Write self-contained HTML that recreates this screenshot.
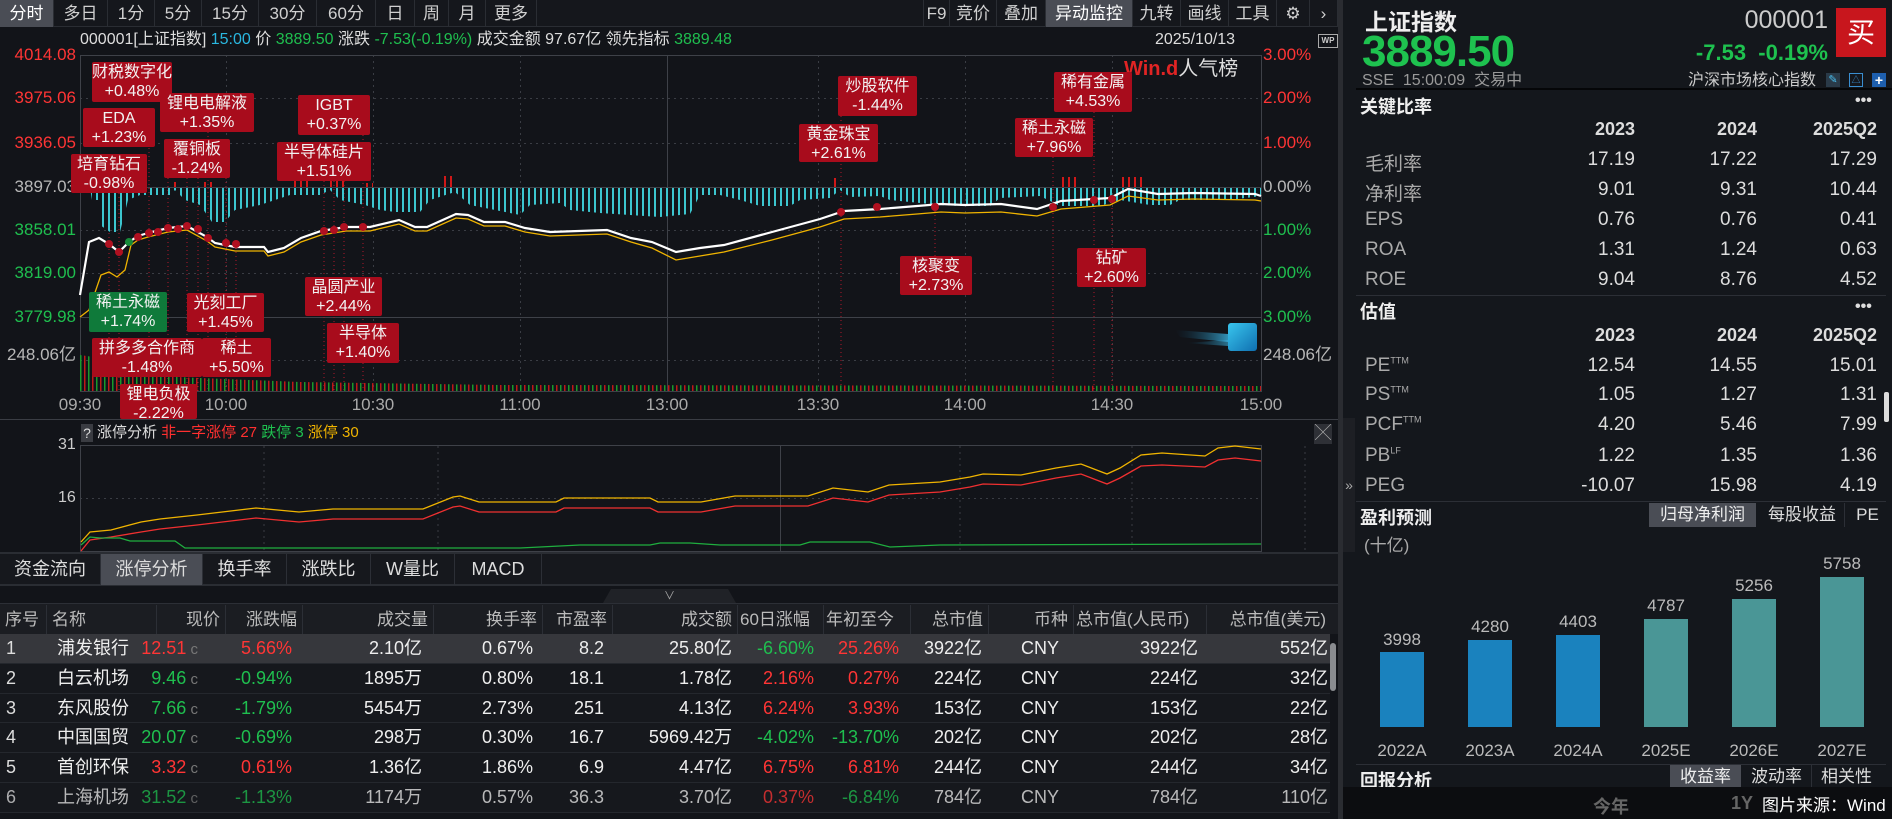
<!DOCTYPE html>
<html><head><meta charset="utf-8">
<style>
*{margin:0;padding:0;box-sizing:border-box}
body{width:1892px;height:819px;background:#121419;overflow:hidden;position:relative;font-family:"Liberation Sans","Noto Sans CJK SC",sans-serif;color:#d8d8d8}
.a{position:absolute;white-space:nowrap}
.tb{position:absolute;top:0;height:27px;font-size:17px;line-height:27px;text-align:center;color:#d0d0d0;border-right:1px solid #2a2d33}
.hl{background:#4a4d55;color:#fff}
.lab{position:absolute;background:#a80c1c;color:#f2f2f2;font-size:16px;line-height:19px;text-align:center;border-radius:2px;padding-top:1px}
.g{background:#0f7a3a}
.r{color:#ff3535}.gr{color:#1fbf4f}.gy{color:#b8b8b8}
.ly{position:absolute;left:0;width:76px;text-align:right;font-size:17px;line-height:18px}
.ry{position:absolute;left:1263px;font-size:17px;line-height:18px}
.tl{position:absolute;top:395px;font-size:17px;color:#aaa;width:60px;text-align:center}
.th{position:absolute;top:605px;height:29px;font-size:17px;line-height:29px;color:#bbb;border-right:1px solid #2c2f36;padding:0 5px}
.row{position:absolute;left:0;width:1330px;height:29.8px;border-bottom:1px solid #24272d;background:#16181d}
.c{position:absolute;font-size:18px;line-height:29px;top:0}
.rv{position:absolute;font-size:19px;color:#ddd;text-align:right}
.rl{position:absolute;left:1365px;font-size:19px;color:#aaa}
.tab{position:absolute;top:554px;height:31px;font-size:18px;line-height:31px;text-align:center;color:#ddd;border-right:1px solid #2c2f36}
</style></head><body>
<div class="a" style="left:0;top:0;width:1338px;height:27px;background:#15171c;border-bottom:1px solid #2a2d33"></div>
<div class="tb hl" style="left:0;width:54px">分时</div>
<div class="tb" style="left:54px;width:54px">多日</div>
<div class="tb" style="left:108px;width:47px">1分</div>
<div class="tb" style="left:155px;width:47px">5分</div>
<div class="tb" style="left:202px;width:57px">15分</div>
<div class="tb" style="left:259px;width:58px">30分</div>
<div class="tb" style="left:317px;width:59px">60分</div>
<div class="tb" style="left:376px;width:39px">日</div>
<div class="tb" style="left:415px;width:34px">周</div>
<div class="tb" style="left:449px;width:37px">月</div>
<div class="tb" style="left:486px;width:51px">更多</div>
<div class="tb" style="left:923px;width:27px;border-left:1px solid #2a2d33">F9</div>
<div class="tb" style="left:950px;width:47px">竞价</div>
<div class="tb" style="left:997px;width:49px">叠加</div>
<div class="tb hl" style="left:1046px;width:87px">异动监控</div>
<div class="tb" style="left:1133px;width:48px">九转</div>
<div class="tb" style="left:1181px;width:48px">画线</div>
<div class="tb" style="left:1229px;width:48px">工具</div>
<div class="tb" style="left:1277px;width:33px">⚙</div>
<div class="tb" style="left:1310px;width:28px">›</div>
<div class="a" style="left:1338px;top:0;width:5px;height:819px;background:#2a2c31"></div>

<div class="a" style="left:80px;top:30px;font-size:16px;line-height:20px;color:#ddd">000001[上证指数] <span style="color:#2ab7e0">15:00</span> 价 <span class="gr">3889.50</span> 涨跌 <span class="gr">-7.53(-0.19%)</span> 成交金额 97.67亿 领先指标 <span class="gr">3889.48</span></div>
<div class="a" style="left:1155px;top:30px;font-size:16px;line-height:20px;color:#ddd">2025/10/13</div>
<div class="a" style="left:1318px;top:34px;width:20px;height:14px;border:1px solid #aaa;font-size:8px;line-height:12px;text-align:center;color:#ccc;font-weight:bold">WP</div>

<svg class="a" style="left:0;top:0" width="1340" height="560">
<defs>
<pattern id="cy" width="6" height="10" patternUnits="userSpaceOnUse"><rect x="0" y="0" width="2" height="10" fill="#3cc6cf"/></pattern>
<pattern id="rd" width="6" height="10" patternUnits="userSpaceOnUse"><rect x="0" y="0" width="2" height="10" fill="#d01818"/></pattern>
<pattern id="vol" width="8" height="10" patternUnits="userSpaceOnUse"><rect x="0" y="0" width="1.5" height="10" fill="#1a9a2a"/><rect x="4" y="0" width="1.5" height="10" fill="#c01818"/></pattern>
<linearGradient id="cube" x1="0" y1="0" x2="1" y2="1"><stop offset="0" stop-color="#39c6ee"/><stop offset="1" stop-color="#0f6fb0"/></linearGradient>
<linearGradient id="trail" x1="0" y1="0" x2="1" y2="0"><stop offset="0" stop-color="#0e3a55" stop-opacity="0"/><stop offset="1" stop-color="#3ab0dd"/></linearGradient>
</defs>
<g stroke="#3a3d44" stroke-width="1" stroke-dasharray="2,4" fill="none">
<line x1="80" y1="98.5" x2="1261" y2="98.5"/><line x1="80" y1="143.5" x2="1261" y2="143.5"/>
<line x1="80" y1="230.5" x2="1261" y2="230.5"/><line x1="80" y1="273.5" x2="1261" y2="273.5"/>
<line x1="80" y1="360.5" x2="1261" y2="360.5"/>
<line x1="226.5" y1="55" x2="226.5" y2="391"/><line x1="373.5" y1="55" x2="373.5" y2="391"/><line x1="520.5" y1="55" x2="520.5" y2="391"/>
<line x1="818.5" y1="55" x2="818.5" y2="391"/><line x1="965.5" y1="55" x2="965.5" y2="391"/><line x1="1112.5" y1="55" x2="1112.5" y2="391"/>
<line x1="264" y1="446" x2="264" y2="551"/><line x1="438" y1="446" x2="438" y2="551"/><line x1="960" y1="446" x2="960" y2="551"/><line x1="1132" y1="446" x2="1132" y2="551"/><line x1="1305" y1="446" x2="1305" y2="551"/>
<line x1="80" y1="498.5" x2="1261" y2="498.5"/>
</g>
<g stroke="#3e4148" stroke-width="1" fill="none">
<rect x="80.5" y="55.5" width="1181" height="336"/>
<line x1="80" y1="187.5" x2="1261" y2="187.5"/><line x1="80" y1="317.5" x2="1261" y2="317.5"/>
<line x1="667.5" y1="55" x2="667.5" y2="391"/>
<rect x="80.5" y="445.5" width="1181" height="106"/>
<line x1="780.5" y1="446" x2="780.5" y2="551"/>
</g>
<line x1="0" y1="419.5" x2="1338" y2="419.5" stroke="#3a3d44"/>
<g stroke="#b0182a" stroke-width="1" stroke-dasharray="1,3">
<line x1="109" y1="193" x2="109" y2="391"/><line x1="119" y1="193" x2="119" y2="391"/><line x1="149" y1="132" x2="149" y2="391"/><line x1="168" y1="178" x2="168" y2="391"/><line x1="187" y1="178" x2="187" y2="391"/><line x1="198" y1="178" x2="198" y2="391"/><line x1="208" y1="132" x2="208" y2="391"/><line x1="226" y1="178" x2="226" y2="391"/><line x1="236" y1="240" x2="236" y2="391"/><line x1="324" y1="181" x2="324" y2="391"/><line x1="334" y1="181" x2="334" y2="391"/><line x1="344" y1="181" x2="344" y2="391"/><line x1="363" y1="135" x2="363" y2="391"/><line x1="841" y1="116" x2="841" y2="391"/><line x1="935" y1="207" x2="935" y2="256"/><line x1="1053" y1="157" x2="1053" y2="391"/><line x1="1094" y1="112" x2="1094" y2="391"/><line x1="1112" y1="200" x2="1112" y2="391"/>
</g>
<polygon fill="url(#cy)" points="80,188 90,188 92,200 98,200 100,225 110,232 120,232 128,200 140,195 170,195 175,190 185,200 200,205 212,222 225,222 235,210 260,205 275,200 290,195 320,195 330,190 340,200 365,205 380,210 395,212 420,212 430,200 455,192 470,205 495,210 520,215 530,205 560,203 570,210 600,213 630,215 660,217 690,214 700,195 720,195 740,200 760,206 790,206 800,200 830,198 840,190 850,197 880,196 890,200 920,203 940,205 960,206 990,206 1000,198 1040,196 1060,206 1100,206 1120,200 1150,205 1170,205 1180,200 1230,200 1261,196 1261,188"/>
<g fill="url(#rd)">
<rect x="170" y="182" width="10" height="5"/><rect x="200" y="182" width="12" height="5"/><rect x="290" y="180" width="20" height="7"/><rect x="330" y="180" width="15" height="7"/><rect x="365" y="183" width="8" height="4"/><rect x="440" y="176" width="16" height="11"/><rect x="830" y="178" width="9" height="9"/><rect x="1060" y="177" width="16" height="10"/><rect x="1120" y="177" width="22" height="10"/>
</g>
<polygon fill="url(#vol)" points="80,391 80,355 100,358 110,368 130,375 200,378 300,382 500,385 1261,386 1261,391"/>
<polyline fill="none" stroke="#f0b400" stroke-width="1.3" points="80,317 89,310 101,275 109,272 117,277 125,270 131,245 138,240"/>
<polyline fill="none" stroke="#f0b400" stroke-width="1.3" transform="translate(0,4)" points="138,236 148,233 168,228 187,226 207,237 215,243 235,247 264,247 268,252 284,248 301,238 321,231 346,227 370,227 399,220 415,227 427,227 456,214 468,215 484,222 505,222 525,228 550,232 607,230 631,238 652,244 676,256 700,252 724,248 772,236 820,223 844,215 880,213 917,210 941,208 965,209 1001,208 1037,212 1061,205 1110,201 1128,192 1158,196 1194,195 1255,196 1261,197"/>
<polyline fill="none" stroke="#fff" stroke-width="2.2" points="80,295 89,242 99,238 109,244 119,252 129,242 138,236 148,233 168,228 187,226 207,237 215,243 235,247 264,247 268,252 284,248 301,238 321,231 346,227 370,227 399,220 415,227 427,227 456,214 468,215 484,222 505,222 525,228 550,232 607,230 631,238 652,242 676,252 700,248 724,245 772,232 820,219 844,211 880,209 917,206 941,204 965,205 1001,204 1037,209 1061,201 1110,198 1128,189 1158,194 1194,193 1255,194 1261,196"/>
<g fill="#b01020">
<circle cx="109" cy="244" r="4"/><circle cx="119" cy="252" r="4"/><circle cx="138" cy="237" r="4"/><circle cx="149" cy="233" r="4"/><circle cx="158" cy="232" r="4"/><circle cx="168" cy="228" r="4"/><circle cx="178" cy="229" r="4"/><circle cx="187" cy="226" r="4"/><circle cx="198" cy="229" r="4"/><circle cx="208" cy="238" r="4"/><circle cx="226" cy="243" r="4"/><circle cx="236" cy="244" r="4"/><circle cx="324" cy="231" r="4"/><circle cx="334" cy="230" r="4"/><circle cx="344" cy="227" r="4"/><circle cx="363" cy="227" r="4"/><circle cx="841" cy="212" r="4"/><circle cx="877" cy="207" r="4"/><circle cx="935" cy="207" r="4"/><circle cx="1053" cy="207" r="4"/><circle cx="1094" cy="200" r="4"/><circle cx="1112" cy="199" r="4"/>
</g>
<circle cx="129" cy="242" r="4" fill="#168a3a"/>
<polygon points="1175,330 1228,334 1228,342 1180,337" fill="url(#trail)" opacity=".8"/>
<polygon points="1185,343 1228,340 1228,346" fill="url(#trail)" opacity=".6"/>
<rect x="1228" y="323" width="29" height="28" rx="3" fill="url(#cube)"/>
<polyline fill="none" stroke="#f0b400" stroke-width="1.3" points="81,542 90,532 111,530 141,522 160,519 197,515 256,508 299,512 333,509 423,509 453,497 460,496 479,502 556,502 564,498 650,498 658,502 701,502 735,496 808,496 833,488 868,492 889,485 940,482 970,477 983,474 1021,475 1056,468 1081,464 1107,474 1120,468 1141,455 1162,453 1205,456 1218,448 1235,446 1261,449"/>
<polyline fill="none" stroke="#f03030" stroke-width="1.3" points="81,551 90,540 111,537 141,532 160,529 197,525 256,518 299,522 333,519 423,519 453,507 460,506 479,512 556,512 564,508 650,508 658,512 701,512 735,506 808,506 833,498 868,502 889,495 940,492 970,487 983,484 1021,485 1056,478 1081,474 1107,484 1120,478 1141,466 1162,465 1205,467 1218,460 1235,458 1261,461"/>
<polyline fill="none" stroke="#1fae3f" stroke-width="1.3" points="81,545 90,537 100,538 120,538 130,541 175,541 185,548 520,548 580,545 650,545 660,543 690,543 720,545 800,545 810,542 870,542 890,547 940,545 1261,544"/>
</svg>

<div class="ly r" style="top:46px">4014.08</div>
<div class="ly r" style="top:89px">3975.06</div>
<div class="ly r" style="top:134px">3936.05</div>
<div class="ly gy" style="top:178px">3897.03</div>
<div class="ly gr" style="top:221px">3858.01</div>
<div class="ly gr" style="top:264px">3819.00</div>
<div class="ly gr" style="top:308px">3779.98</div>
<div class="ly gy" style="top:346px">248.06亿</div>
<div class="ry r" style="top:46px">3.00%</div>
<div class="ry r" style="top:89px">2.00%</div>
<div class="ry r" style="top:134px">1.00%</div>
<div class="ry gy" style="top:178px">0.00%</div>
<div class="ry gr" style="top:221px">1.00%</div>
<div class="ry gr" style="top:264px">2.00%</div>
<div class="ry gr" style="top:308px">3.00%</div>
<div class="ry gy" style="top:346px">248.06亿</div>
<div class="tl" style="left:50px">09:30</div>
<div class="tl" style="left:196px">10:00</div>
<div class="tl" style="left:343px">10:30</div>
<div class="tl" style="left:490px">11:00</div>
<div class="tl" style="left:637px">13:00</div>
<div class="tl" style="left:788px">13:30</div>
<div class="tl" style="left:935px">14:00</div>
<div class="tl" style="left:1082px">14:30</div>
<div class="tl" style="left:1231px">15:00</div>
<div class="a" style="left:1124px;top:58px;font-size:20px;line-height:22px;color:#ddd"><span style="color:#e02424;font-weight:bold">Win.d</span>人气榜</div>

<div class="lab" style="left:92px;top:62px;width:80px;height:40px">财税数字化<br>+0.48%</div>
<div class="lab" style="left:83px;top:108px;width:72px;height:39px">EDA<br>+1.23%</div>
<div class="lab" style="left:160px;top:93px;width:94px;height:39px">锂电电解液<br>+1.35%</div>
<div class="lab" style="left:298px;top:95px;width:72px;height:40px">IGBT<br>+0.37%</div>
<div class="lab" style="left:164px;top:139px;width:66px;height:39px">覆铜板<br>-1.24%</div>
<div class="lab" style="left:277px;top:142px;width:94px;height:39px">半导体硅片<br>+1.51%</div>
<div class="lab" style="left:71px;top:154px;width:76px;height:39px">培育钻石<br>-0.98%</div>
<div class="lab g" style="left:89px;top:292px;width:78px;height:40px">稀土永磁<br>+1.74%</div>
<div class="lab" style="left:187px;top:293px;width:77px;height:39px">光刻工厂<br>+1.45%</div>
<div class="lab" style="left:305px;top:277px;width:77px;height:39px">晶圆产业<br>+2.44%</div>
<div class="lab" style="left:327px;top:323px;width:72px;height:40px">半导体<br>+1.40%</div>
<div class="lab" style="left:92px;top:338px;width:110px;height:39px">拼多多合作商<br>-1.48%</div>
<div class="lab" style="left:202px;top:338px;width:69px;height:39px">稀土<br>+5.50%</div>
<div class="lab" style="left:120px;top:384px;width:77px;height:35px;overflow:hidden">锂电负极<br>-2.22%</div>
<div class="lab" style="left:838px;top:76px;width:79px;height:40px">炒股软件<br>-1.44%</div>
<div class="lab" style="left:799px;top:124px;width:79px;height:38px">黄金珠宝<br>+2.61%</div>
<div class="lab" style="left:900px;top:256px;width:72px;height:39px">核聚变<br>+2.73%</div>
<div class="lab" style="left:1077px;top:248px;width:69px;height:39px">钻矿<br>+2.60%</div>
<div class="lab" style="left:1054px;top:72px;width:78px;height:40px">稀有金属<br>+4.53%</div>
<div class="lab" style="left:1015px;top:118px;width:78px;height:39px">稀土永磁<br>+7.96%</div>

<div class="a" style="left:81px;top:424px;width:12px;height:18px;background:#3a3c42;font-size:14px;line-height:18px;text-align:center;color:#ddd">?</div>
<div class="a" style="left:97px;top:423px;font-size:15px;line-height:20px;color:#ddd">涨停分析 <span style="color:#ff3030">非一字涨停 27</span> <span class="gr">跌停 3</span> <span style="color:#f0b400">涨停 30</span></div>
<div class="a" style="left:58px;top:436px;font-size:16px;color:#ccc">31</div>
<div class="a" style="left:58px;top:489px;font-size:16px;color:#ccc">16</div>
<div class="a" style="left:1314px;top:424px;width:18px;height:20px;background:#2e3036;color:#aaa;font-size:16px;line-height:20px;text-align:center">╳</div>

<div class="a" style="left:0;top:552px;width:1338px;height:34px;background:#16181d;border-top:2px solid #2a2d33;border-bottom:2px solid #2a2d33"></div>
<div class="tab" style="left:0;width:101px">资金流向</div>
<div class="tab hl" style="left:101px;width:102px">涨停分析</div>
<div class="tab" style="left:203px;width:84px">换手率</div>
<div class="tab" style="left:287px;width:84px">涨跌比</div>
<div class="tab" style="left:371px;width:84px">W量比</div>
<div class="tab" style="left:455px;width:87px">MACD</div>
<div class="a" style="left:0;top:588px;width:1338px;height:15px;background:#121419"></div>
<div class="a" style="left:603px;top:589px;width:133px;height:14px;background:#202227;clip-path:polygon(6% 0,94% 0,100% 100%,0 100%);font-size:11px;line-height:14px;text-align:center;color:#aaa">∨</div>

<div class="a" style="left:0;top:603px;width:1338px;height:31px;background:#1b1d22;border-top:1px solid #2c2f36"></div>
<div class="th" style="left:0;width:47px">序号</div>
<div class="th" style="left:47px;width:110px">名称</div>
<div class="th" style="left:157px;width:69px;text-align:right">现价</div>
<div class="th" style="left:226px;width:77px;text-align:right">涨跌幅</div>
<div class="th" style="left:303px;width:131px;text-align:right">成交量</div>
<div class="th" style="left:434px;width:109px;text-align:right">换手率</div>
<div class="th" style="left:543px;width:70px;text-align:right">市盈率</div>
<div class="th" style="left:613px;width:125px;text-align:right">成交额</div>
<div class="th" style="left:738px;width:86px;padding:0 2px">60日涨幅</div>
<div class="th" style="left:824px;width:87px;padding:0 2px">年初至今</div>
<div class="th" style="left:911px;width:78px;text-align:right">总市值</div>
<div class="th" style="left:989px;width:85px;text-align:right">币种</div>
<div class="th" style="left:1074px;width:133px;padding:0 2px">总市值(人民币)</div>
<div class="th" style="left:1207px;width:124px;text-align:right;border:none">总市值(美元)</div>

<div class="row" style="top:634px;background:#36373c"></div>
<div class="row" style="top:663.8px"></div>
<div class="row" style="top:693.6px"></div>
<div class="row" style="top:723.4px"></div>
<div class="row" style="top:753.2px"></div>
<div class="row" style="top:783px"></div>
<div class="a" style="left:1330px;top:643px;width:6px;height:48px;background:#8a8c90;border-radius:3px"></div>

<div class="a" style="left:0;top:634px;width:1330px;height:180px">
<div class="a" style="top:0;left:0;width:1330px;height:30px">
 <span class="c" style="left:6px;color:#ddd">1</span><span class="c" style="left:57px;color:#eee">浦发银行</span>
 <span class="c r" style="right:1132px">12.51<span style="color:#777;font-size:15px"> c</span></span>
 <span class="c r" style="right:1038px">5.66%</span><span class="c" style="right:908px;color:#eee">2.10亿</span><span class="c" style="right:797px;color:#eee">0.67%</span><span class="c" style="right:726px;color:#eee">8.2</span><span class="c" style="right:598px;color:#eee">25.80亿</span><span class="c gr" style="right:516px">-6.60%</span><span class="c r" style="right:431px">25.26%</span><span class="c" style="right:348px;color:#eee">3922亿</span><span class="c" style="right:271px;color:#eee">CNY</span><span class="c" style="right:132px;color:#eee">3922亿</span><span class="c" style="right:2px;color:#eee">552亿</span>
</div>
<div class="a" style="top:29.8px;left:0;width:1330px;height:30px">
 <span class="c" style="left:6px;color:#ddd">2</span><span class="c" style="left:57px;color:#eee">白云机场</span>
 <span class="c gr" style="right:1132px">9.46<span style="color:#777;font-size:15px"> c</span></span>
 <span class="c gr" style="right:1038px">-0.94%</span><span class="c" style="right:908px;color:#eee">1895万</span><span class="c" style="right:797px;color:#eee">0.80%</span><span class="c" style="right:726px;color:#eee">18.1</span><span class="c" style="right:598px;color:#eee">1.78亿</span><span class="c r" style="right:516px">2.16%</span><span class="c r" style="right:431px">0.27%</span><span class="c" style="right:348px;color:#eee">224亿</span><span class="c" style="right:271px;color:#eee">CNY</span><span class="c" style="right:132px;color:#eee">224亿</span><span class="c" style="right:2px;color:#eee">32亿</span>
</div>
<div class="a" style="top:59.6px;left:0;width:1330px;height:30px">
 <span class="c" style="left:6px;color:#ddd">3</span><span class="c" style="left:57px;color:#eee">东风股份</span>
 <span class="c gr" style="right:1132px">7.66<span style="color:#777;font-size:15px"> c</span></span>
 <span class="c gr" style="right:1038px">-1.79%</span><span class="c" style="right:908px;color:#eee">5454万</span><span class="c" style="right:797px;color:#eee">2.73%</span><span class="c" style="right:726px;color:#eee">251</span><span class="c" style="right:598px;color:#eee">4.13亿</span><span class="c r" style="right:516px">6.24%</span><span class="c r" style="right:431px">3.93%</span><span class="c" style="right:348px;color:#eee">153亿</span><span class="c" style="right:271px;color:#eee">CNY</span><span class="c" style="right:132px;color:#eee">153亿</span><span class="c" style="right:2px;color:#eee">22亿</span>
</div>
<div class="a" style="top:89.4px;left:0;width:1330px;height:30px">
 <span class="c" style="left:6px;color:#ddd">4</span><span class="c" style="left:57px;color:#eee">中国国贸</span>
 <span class="c gr" style="right:1132px">20.07<span style="color:#777;font-size:15px"> c</span></span>
 <span class="c gr" style="right:1038px">-0.69%</span><span class="c" style="right:908px;color:#eee">298万</span><span class="c" style="right:797px;color:#eee">0.30%</span><span class="c" style="right:726px;color:#eee">16.7</span><span class="c" style="right:598px;color:#eee">5969.42万</span><span class="c gr" style="right:516px">-4.02%</span><span class="c gr" style="right:431px">-13.70%</span><span class="c" style="right:348px;color:#eee">202亿</span><span class="c" style="right:271px;color:#eee">CNY</span><span class="c" style="right:132px;color:#eee">202亿</span><span class="c" style="right:2px;color:#eee">28亿</span>
</div>
<div class="a" style="top:119.2px;left:0;width:1330px;height:30px">
 <span class="c" style="left:6px;color:#ddd">5</span><span class="c" style="left:57px;color:#eee">首创环保</span>
 <span class="c r" style="right:1132px">3.32<span style="color:#777;font-size:15px"> c</span></span>
 <span class="c r" style="right:1038px">0.61%</span><span class="c" style="right:908px;color:#eee">1.36亿</span><span class="c" style="right:797px;color:#eee">1.86%</span><span class="c" style="right:726px;color:#eee">6.9</span><span class="c" style="right:598px;color:#eee">4.47亿</span><span class="c r" style="right:516px">6.75%</span><span class="c r" style="right:431px">6.81%</span><span class="c" style="right:348px;color:#eee">244亿</span><span class="c" style="right:271px;color:#eee">CNY</span><span class="c" style="right:132px;color:#eee">244亿</span><span class="c" style="right:2px;color:#eee">34亿</span>
</div>
<div class="a" style="top:149px;left:0;width:1330px;height:30px;opacity:.75">
 <span class="c" style="left:6px;color:#ddd">6</span><span class="c" style="left:57px;color:#eee">上海机场</span>
 <span class="c gr" style="right:1132px">31.52<span style="color:#777;font-size:15px"> c</span></span>
 <span class="c gr" style="right:1038px">-1.13%</span><span class="c" style="right:908px;color:#eee">1174万</span><span class="c" style="right:797px;color:#eee">0.57%</span><span class="c" style="right:726px;color:#eee">36.3</span><span class="c" style="right:598px;color:#eee">3.70亿</span><span class="c r" style="right:516px">0.37%</span><span class="c gr" style="right:431px">-6.84%</span><span class="c" style="right:348px;color:#eee">784亿</span><span class="c" style="right:271px;color:#eee">CNY</span><span class="c" style="right:132px;color:#eee">784亿</span><span class="c" style="right:2px;color:#eee">110亿</span>
</div>
</div>

<div class="a" style="left:1343px;top:0;width:549px;height:819px;background:#14171c"></div>
<div class="a" style="left:1343px;top:418px;width:12px;height:134px;background:#1d1f24;color:#aaa;font-size:14px;line-height:134px;text-align:center">»</div>
<div class="a" style="left:1365px;top:3px;font-size:23px;font-weight:bold;color:#eee">上证指数</div>
<div class="a" style="left:1362px;top:28px;font-size:44px;font-weight:bold;color:#1ec24f;letter-spacing:-1px;line-height:48px">3889.50</div>
<div class="a" style="left:1362px;top:72px;font-size:16px;color:#999;line-height:18px">SSE&nbsp;&nbsp;15:00:09&nbsp;&nbsp;交易中</div>
<div class="a" style="left:1700px;top:5px;width:128px;text-align:right;font-size:25px;color:#ccc;line-height:30px">000001</div>
<div class="a" style="left:1660px;top:40px;width:168px;text-align:right;font-size:22px;font-weight:bold;color:#1ec24f;line-height:26px">-7.53&nbsp;&nbsp;-0.19%</div>
<div class="a" style="left:1836px;top:8px;width:50px;height:49px;background:#c8161d;color:#fff;font-size:28px;line-height:49px;text-align:center">买</div>
<div class="a" style="left:1680px;top:72px;width:136px;text-align:right;font-size:16px;color:#ccc;line-height:18px">沪深市场核心指数</div>
<div class="a" style="left:1826px;top:73px;width:14px;height:14px;background:#2a3a48;color:#4ac0f0;font-size:11px;line-height:14px;text-align:center">✎</div>
<div class="a" style="left:1849px;top:73px;width:14px;height:14px;border:1px solid #3a8ed0;color:#3a8ed0;font-size:9px;line-height:12px;text-align:center">△</div>
<div class="a" style="left:1872px;top:73px;width:14px;height:14px;background:#1e5fae;color:#fff;font-size:14px;line-height:14px;text-align:center;font-weight:bold">+</div>
<div class="a" style="left:1356px;top:88px;width:536px;height:2px;background:#050608"></div>

<div class="a" style="left:1360px;top:93px;font-size:18px;font-weight:bold;color:#eee">关键比率</div>
<div class="a" style="left:1855px;top:92px;font-size:16px;color:#ddd;font-weight:bold">•••</div>
<div class="rv" style="top:119px;right:257px;font-weight:bold;font-size:18px">2023</div>
<div class="rv" style="top:119px;right:135px;font-weight:bold;font-size:18px">2024</div>
<div class="rv" style="top:119px;right:15px;font-weight:bold;font-size:18px">2025Q2</div>
<div class="rl" style="top:149px">毛利率</div><div class="rv" style="top:149px;right:257px">17.19</div><div class="rv" style="top:149px;right:135px">17.22</div><div class="rv" style="top:149px;right:15px">17.29</div>
<div class="rl" style="top:179px">净利率</div><div class="rv" style="top:179px;right:257px">9.01</div><div class="rv" style="top:179px;right:135px">9.31</div><div class="rv" style="top:179px;right:15px">10.44</div>
<div class="rl" style="top:209px">EPS</div><div class="rv" style="top:209px;right:257px">0.76</div><div class="rv" style="top:209px;right:135px">0.76</div><div class="rv" style="top:209px;right:15px">0.41</div>
<div class="rl" style="top:239px">ROA</div><div class="rv" style="top:239px;right:257px">1.31</div><div class="rv" style="top:239px;right:135px">1.24</div><div class="rv" style="top:239px;right:15px">0.63</div>
<div class="rl" style="top:269px">ROE</div><div class="rv" style="top:269px;right:257px">9.04</div><div class="rv" style="top:269px;right:135px">8.76</div><div class="rv" style="top:269px;right:15px">4.52</div>
<div class="a" style="left:1356px;top:295px;width:530px;height:1px;background:#2c2f36"></div>
<div class="a" style="left:1360px;top:298px;font-size:18px;font-weight:bold;color:#eee">估值</div>
<div class="a" style="left:1855px;top:298px;font-size:16px;color:#ddd;font-weight:bold">•••</div>
<div class="rv" style="top:325px;right:257px;font-weight:bold;font-size:18px">2023</div>
<div class="rv" style="top:325px;right:135px;font-weight:bold;font-size:18px">2024</div>
<div class="rv" style="top:325px;right:15px;font-weight:bold;font-size:18px">2025Q2</div>
<div class="rl" style="top:355px">PE<sup style="font-size:9px">TTM</sup></div><div class="rv" style="top:355px;right:257px">12.54</div><div class="rv" style="top:355px;right:135px">14.55</div><div class="rv" style="top:355px;right:15px">15.01</div>
<div class="rl" style="top:384px">PS<sup style="font-size:9px">TTM</sup></div><div class="rv" style="top:384px;right:257px">1.05</div><div class="rv" style="top:384px;right:135px">1.27</div><div class="rv" style="top:384px;right:15px">1.31</div>
<div class="rl" style="top:414px">PCF<sup style="font-size:9px">TTM</sup></div><div class="rv" style="top:414px;right:257px">4.20</div><div class="rv" style="top:414px;right:135px">5.46</div><div class="rv" style="top:414px;right:15px">7.99</div>
<div class="rl" style="top:445px">PB<sup style="font-size:9px">LF</sup></div><div class="rv" style="top:445px;right:257px">1.22</div><div class="rv" style="top:445px;right:135px">1.35</div><div class="rv" style="top:445px;right:15px">1.36</div>
<div class="rl" style="top:475px">PEG</div><div class="rv" style="top:475px;right:257px">-10.07</div><div class="rv" style="top:475px;right:135px">15.98</div><div class="rv" style="top:475px;right:15px">4.19</div>
<div class="a" style="left:1884px;top:392px;width:5px;height:30px;background:#ddd;border-radius:2px"></div>
<div class="a" style="left:1356px;top:501px;width:530px;height:1px;background:#2c2f36"></div>
<div class="a" style="left:1360px;top:504px;font-size:18px;font-weight:bold;color:#eee">盈利预测</div>
<div class="a" style="left:1649px;top:503px;width:107px;height:24px;background:#4a4d55;color:#eee;font-size:17px;line-height:24px;text-align:center">归母净利润</div>
<div class="a" style="left:1760px;top:503px;width:85px;height:24px;color:#ddd;font-size:17px;line-height:24px;text-align:center;border-right:1px solid #2c2f36">每股收益</div>
<div class="a" style="left:1850px;top:503px;width:35px;height:24px;color:#ddd;font-size:17px;line-height:24px;text-align:center">PE</div>
<div class="a" style="left:1364px;top:531px;font-size:17px;color:#aaa">(十亿)</div>
<svg class="a" style="left:1343px;top:550px" width="549" height="215">
<g fill="#1a82be"><rect x="37" y="102" width="44" height="75"/><rect x="125" y="90" width="44" height="87"/><rect x="213" y="85" width="44" height="92"/></g>
<g fill="#4a9696"><rect x="301" y="69" width="44" height="108"/><rect x="389" y="49" width="44" height="128"/><rect x="477" y="27" width="44" height="150"/></g>
<g fill="#bbb" font-family="Liberation Sans" font-size="17" text-anchor="middle">
<text x="59" y="95">3998</text><text x="147" y="82">4280</text><text x="235" y="77">4403</text><text x="323" y="61">4787</text><text x="411" y="41">5256</text><text x="499" y="19">5758</text>
<text x="59" y="206">2022A</text><text x="147" y="206">2023A</text><text x="235" y="206">2024A</text><text x="323" y="206">2025E</text><text x="411" y="206">2026E</text><text x="499" y="206">2027E</text>
</g>
</svg>
<div class="a" style="left:1356px;top:764px;width:530px;height:1px;background:#2c2f36"></div>
<div class="a" style="left:1360px;top:767px;font-size:18px;font-weight:bold;color:#eee">回报分析</div>
<div class="a" style="left:1670px;top:765px;width:71px;height:24px;background:#4a4d55;color:#eee;font-size:17px;line-height:24px;text-align:center">收益率</div>
<div class="a" style="left:1742px;top:765px;width:70px;height:24px;color:#ddd;font-size:17px;line-height:24px;text-align:center;border-right:1px solid #2c2f36">波动率</div>
<div class="a" style="left:1813px;top:765px;width:67px;height:24px;color:#ddd;font-size:17px;line-height:24px;text-align:center">相关性</div>
<div class="a" style="left:1343px;top:787px;width:549px;height:32px;background:#0c0d10"></div>
<div class="a" style="left:1593px;top:793px;font-size:18px;font-weight:bold;color:#666">今年</div>
<div class="a" style="left:1731px;top:793px;font-size:18px;font-weight:bold;color:#666">1Y</div>
<div class="a" style="left:1762px;top:791px;font-size:17px;color:#fff">图片来源：Wind</div>
</body></html>
